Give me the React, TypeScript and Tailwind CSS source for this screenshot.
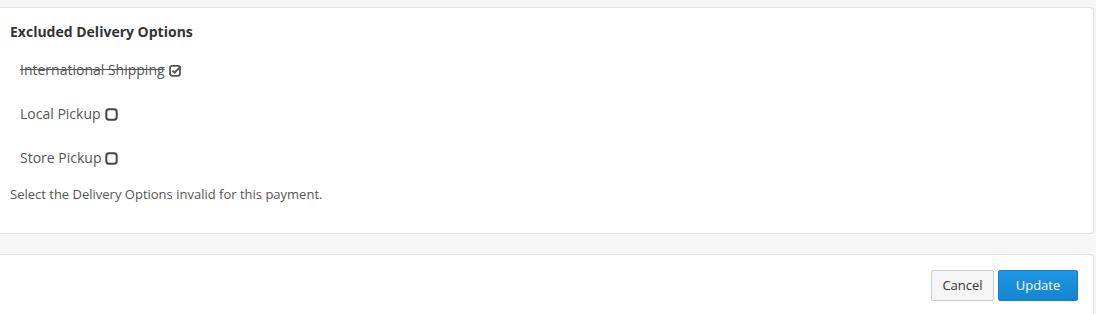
const CheckSquare = () => (
  <svg width="13" height="13" viewBox="0 0 13 13" className="ml-[4px] inline-block">
    <rect x="1" y="1.8" width="10" height="10" rx="2.2" fill="none" stroke="#555" strokeWidth="1.8" />
    <path d="M3.4 6.6 L5.6 8.7 L11.8 2.4" fill="none" stroke="#555" strokeWidth="2" />
  </svg>
);

const Square = () => (
  <svg width="13" height="13" viewBox="0 0 13 13" className="ml-[4px] inline-block">
    <rect x="1.3" y="1.3" width="10.4" height="10.4" rx="2.6" fill="none" stroke="#444" strokeWidth="2" />
  </svg>
);

export default function App() {
  return (
    <div className="min-h-[314px] bg-[#f5f5f5] pt-[7px] text-[#333] font-['Open_Sans',sans-serif]">
      <div className="mr-[2px] bg-white border border-l-0 border-[#e2e2e2] rounded-r-[4px] pt-[14px] pb-[30px] pl-[10px]">
        <h3 className="text-[14px] leading-[20px] font-bold text-[#333]">Excluded Delivery Options</h3>
        <div className="mt-[18px] flex flex-col gap-[24px] pl-[10px] text-[14px] leading-[20px] text-[#555]">
          <div className="flex items-center">
            <span className="line-through">International Shipping</span>
            <CheckSquare />
          </div>
          <div className="flex items-center">
            <span>Local Pickup</span>
            <Square />
          </div>
          <div className="flex items-center">
            <span>Store Pickup</span>
            <Square />
          </div>
        </div>
        <p className="mt-[17px] text-[13px] leading-[18px] text-[#555]">
          Select the Delivery Options invalid for this payment.
        </p>
      </div>

      <div className="mt-[20px] mr-[2px] bg-white border border-l-0 border-[#e2e2e2] rounded-r-[4px] pt-[15px] pb-[20px] pr-[15px] flex justify-end gap-[4px]">
        <button className="h-[31px] w-[63px] rounded-[2px] border border-[#ccc] bg-[#f5f5f5] text-[13px] text-[#333]">
          Cancel
        </button>
        <button className="h-[31px] w-[80px] rounded-[2px] border border-[#1481c7] bg-gradient-to-b from-[#1d96e3] to-[#1585d2] text-[13px] text-white">
          Update
        </button>
      </div>
    </div>
  );
}
